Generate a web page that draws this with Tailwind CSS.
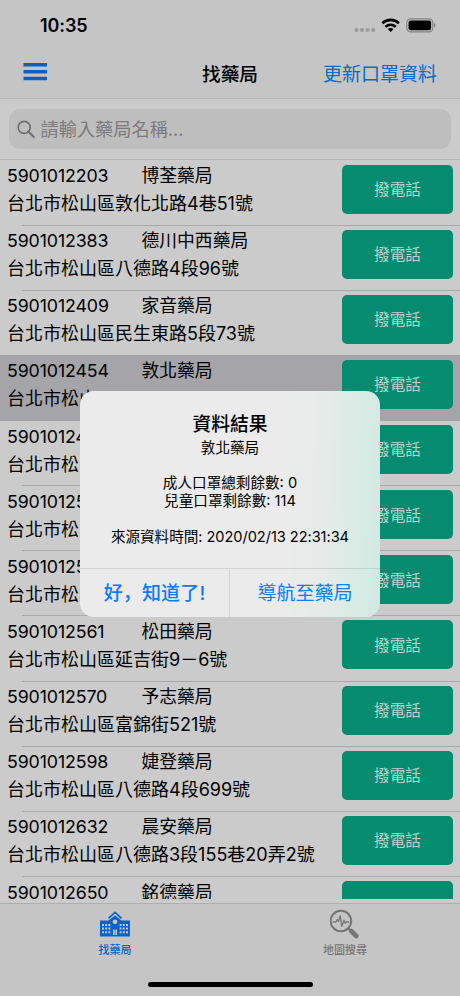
<!DOCTYPE html>
<html lang="zh-Hant">
<head>
<meta charset="utf-8">
<title>找藥局</title>
<script src="https://cdn.jsdelivr.net/npm/@tailwindcss/browser@4"></script>
</head>
<body class="bg-[#cbcbcb]">
<div class="relative flex h-[996px] w-[460px] flex-col overflow-hidden bg-[#cbcbcb] font-['Inter','Noto_Sans_CJK_TC',sans-serif] text-black">
  <header class="flex h-[99px] shrink-0 flex-col border-b border-[#b9b9b9] bg-[#c5c5c5]">
    <div class="flex h-[50px] items-center pt-[2px] pr-[24px] pl-[40px]">
      <span class="text-[18px] leading-6 font-semibold tracking-[-0.1px]">10:35</span>
      <svg class="ml-auto" width="84" height="18" viewBox="0 0 84 18">
        <g fill="#9b9b9b"><circle cx="4.5" cy="13" r="2.1"/><circle cx="10" cy="13" r="2.1"/><circle cx="15.7" cy="13" r="2.1"/><circle cx="21.2" cy="13" r="2.1"/></g>
        <g fill="none" stroke="#000" stroke-width="2.6"><path d="M30.4 6.2c4.7-4.4 11.8-4.4 16.5 0"/><path d="M33.5 9.9c3-2.7 7.3-2.7 10.3 0"/></g>
        <path d="M35.8 12.1c1.7-1.4 4-1.4 5.7 0l-2.8 3z"/>
        <rect x="54.8" y="1.9" width="26" height="13" rx="3.8" fill="none" stroke="#828282" stroke-width="1.1"/>
        <rect x="56.5" y="3.6" width="22.6" height="9.6" rx="2.2"/>
        <path d="M82 6c2 .8 2 3.6 0 4.4z" fill="#828282"/>
      </svg>
    </div>
    <div class="grid h-[48px] grid-cols-[1fr_auto_1fr] items-center pr-[23px] pl-[23px]">
      <svg width="24" height="18" viewBox="0 0 24 18" fill="#0a5fc4" class="-mt-[4px]"><path d="M.5 0H24v3.6H.5zM.5 6.9H24v3.6H.5zM.5 13.7H24v3.6H.5z"/></svg>
      <h1 class="pt-px text-[18.7px] leading-6 font-medium">找藥局</h1>
      <button class="justify-self-end pt-px text-[19px] leading-6 whitespace-nowrap text-[#0a69cc]">更新口罩資料</button>
    </div>
  </header>
  <div class="flex h-[61px] shrink-0 items-center border-b border-[#b5b5b5] px-[9px]">
    <div class="flex h-[40px] w-full items-center rounded-[11px] bg-[#bebebe] pl-[8px] text-[#7b7b7d]">
      <svg width="18" height="18" viewBox="0 0 18 18" fill="none" stroke="#6e6e70" stroke-width="1.6"><circle cx="7.2" cy="7.4" r="6"/><path d="m11.6 11.8 5 5" stroke-width="2.1" stroke-linecap="round"/></svg>
      <span class="ml-[5.5px] text-[18.2px] leading-6">請輸入藥局名稱...</span>
    </div>
  </div>
  <main id="list" class="h-[739px] shrink-0 overflow-hidden"></main>
  <footer class="mt-[4px] flex h-[93px] shrink-0 flex-col border-t border-[#afafaf] bg-[#c5c5c5]">
    <div class="grid grid-cols-2 text-[11px] leading-4 font-medium">
      <div class="flex flex-col items-center pt-[7px] text-[#0a64c8]">
        <svg width="30" height="27" viewBox="0 0 30 27">
          <path d="M8.5 7.4 15 1.4l6.5 6" fill="none" stroke="currentColor" stroke-width="1.6"/>
          <path d="M0 9.6h8.5L15 4.4l6.5 5.2H30v16H0z" fill="currentColor"/>
          <circle cx="15" cy="10.8" r="2.4" fill="#c5c5c5"/>
          <g fill="#c5c5c5"><path d="M2 13h2v2H2zM5.2 13h2v2h-2zM8.4 13h2v2h-2zM19.6 13h2v2h-2zM22.8 13h2v2h-2zM26 13h2v2h-2zM2 16.6h2v2H2zM5.2 16.6h2v2h-2zM8.4 16.6h2v2h-2zM19.6 16.6h2v2h-2zM22.8 16.6h2v2h-2zM26 16.6h2v2h-2zM2 20.2h2v2H2zM5.2 20.2h2v2h-2zM8.4 20.2h2v2h-2zM19.6 20.2h2v2h-2zM22.8 20.2h2v2h-2zM26 20.2h2v2h-2zM13 18.6h1.7v5.4H13zM15.3 18.6H17v5.4h-1.7z"/></g>
        </svg>
        <span class="mt-[4px]">找藥局</span>
      </div>
      <div class="flex flex-col items-center pt-[5px] text-[#757575]">
        <svg width="30" height="30" viewBox="0 0 30 30" fill="none" stroke="currentColor">
          <circle cx="10.9" cy="12" r="10.3" stroke-width="2"/>
          <path d="M2.8 13H6l1.2-2.5 1.3 2 1.7-5.6 1.6 10.5L14 11.200l1.100 3 1.200-1.200h3" stroke-width="1.3" stroke-linejoin="round"/>
          <path d="m18.400 19.400 2.600 2.600" stroke-width="2"/><path d="m21.200 22 5 5" stroke-width="4.6" stroke-linecap="round"/>
        </svg>
        <span class="mt-[3px]">地圖搜尋</span>
      </div>
    </div>
    <div class="mx-auto mt-auto mb-[9px] h-[5.5px] w-[165px] rounded-full bg-black"></div>
  </footer>

  <section class="absolute top-[390.5px] left-[80px] flex h-[226.5px] w-[300px] flex-col overflow-hidden rounded-[14px] bg-[#ebebeb] bg-[linear-gradient(92deg,#ebebeb_68%,#e4ebe8_82%,#d8ebe5_93%,#cfeae1_100%)] text-center">
    <div class="flex h-[177.5px] flex-col pt-[21px]">
      <h2 class="text-[18.8px] leading-[26px] font-medium">資料結果</h2>
      <div class="mt-[1px] text-[14.6px] leading-[18px]">
        <p>敦北藥局</p><p class="h-[17.6px]"></p>
        <p>成人口罩總剩餘數: 0</p>
        <p>兒童口罩剩餘數: 114</p><p class="h-[17.6px]"></p>
        <p class="tracking-[-0.05px] whitespace-nowrap">來源資料時間: 2020/02/13 22:31:34</p>
      </div>
    </div>
    <div class="grid flex-1 grid-cols-2 border-t border-black/10 text-[19px] text-[#0a7aff]">
      <button lang="zh-Hans" class="border-r border-black/10 pt-[3px] font-['Inter','Noto_Sans_CJK_SC',sans-serif] font-medium tracking-[0.15px]">好，知道了!</button>
      <button class="pt-[3px]">導航至藥局</button>
    </div>
  </section>
</div>
<script>
const rows = [
  ['5901012203', '博荃藥局', '台北市松山區敦化北路4巷51號'],
  ['5901012383', '德川中西藥局', '台北市松山區八德路4段96號'],
  ['5901012409', '家音藥局', '台北市松山區民生東路5段73號'],
  ['5901012454', '敦北藥局', '台北市松山'],
  ['5901012490', '', '台北市松山'],
  ['5901012500', '', '台北市松山'],
  ['5901012550', '', '台北市松山'],
  ['5901012561', '松田藥局', '台北市松山區延吉街9－6號'],
  ['5901012570', '予志藥局', '台北市松山區富錦街521號'],
  ['5901012598', '婕登藥局', '台北市松山區八德路4段699號'],
  ['5901012632', '晨安藥局', '台北市松山區八德路3段155巷20弄2號'],
  ['5901012650', '銘德藥局', ''],
];
document.getElementById('list').innerHTML = rows.map(([id, name, address], i) => `
  <div class="flex h-[65.15px] ${i === 3 ? 'bg-[#a5a4a9]' : ''}">
    <div class="relative flex-1 pl-[7px] text-[17.8px] whitespace-nowrap">
      <div class="flex h-[30px] items-center pt-[2px] leading-6"><span class="w-[134.5px] tracking-[-0.12px]">${id}</span><span>${name}</span></div>
      <div class="flex h-[28px] items-center text-[18px] leading-6">${address}</div>
      <div class="absolute right-[-118px] bottom-[-0.5px] left-[22px] h-px ${i === 3 || i === 2 ? '' : 'bg-[#a9a9ab]'}"></div>
    </div>
    <button class="relative mt-[4.5px] mr-[7px] h-[49px] w-[111px] rounded-[5px] bg-[#058c70] pt-px text-[15.6px] text-[#b9d3cc]">${i === 11 ? '' : '撥電話'}</button>
  </div>`).join('');
</script>
</body>
</html>
